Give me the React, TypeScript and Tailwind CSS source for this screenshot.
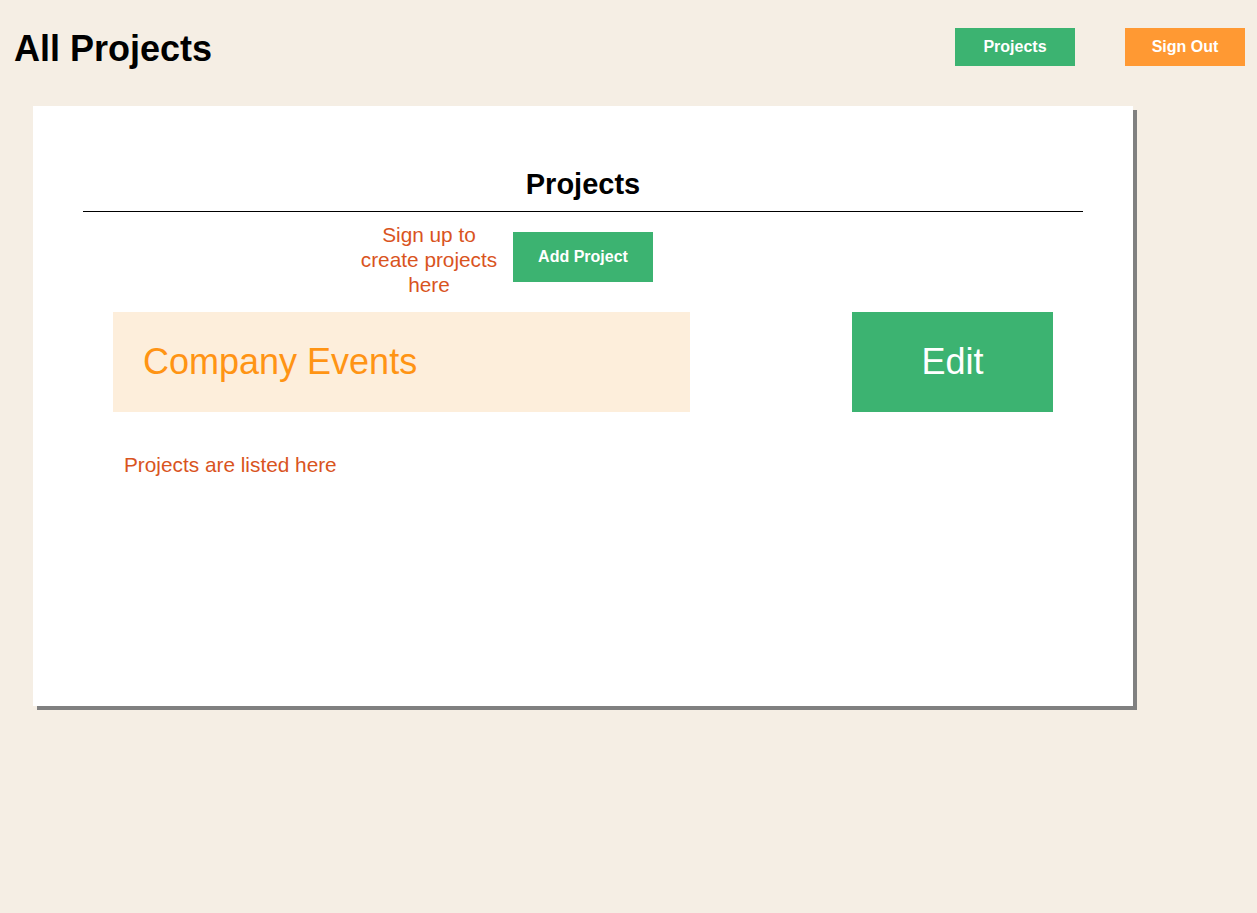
import React from "react";

export default function App() {
  return (
    <div className="min-h-[913px] w-full bg-[#f5eee4] font-['Liberation_Sans',Arial,sans-serif]">
      <header className="flex h-[66px] items-start justify-between pl-[14px] pr-[12px] pt-[28px]">
        <h1 className="mt-[1px] text-[36px] font-bold leading-[40px] text-black">All Projects</h1>
        <div className="flex gap-[50px]">
          <button className="h-[38px] w-[120px] bg-[#3cb371] text-[16px] font-bold text-white">Projects</button>
          <button className="h-[38px] w-[120px] bg-[#ff9933] text-[16px] font-bold text-white">Sign Out</button>
        </div>
      </header>
      <main className="ml-[33px] mt-[40px] h-[600px] w-[1100px] bg-white shadow-[4px_4px_0_#808080]">
        <div className="pt-[62px]">
          <h2 className="text-center text-[29px] font-bold leading-[32px] text-black">Projects</h2>
          <div className="mx-[50px] mt-[11px] h-px bg-black" />
          <div className="mt-[10px] flex items-start pl-[326px]">
            <p className="w-[140px] text-center text-[20.8px] leading-[25px] text-[#d9541e]">
              Sign up to create projects here
            </p>
            <button className="ml-[14px] mt-[10px] h-[50px] w-[140px] bg-[#3cb371] text-[16px] font-bold text-white">
              Add Project
            </button>
          </div>
          <div className="mx-[80px] mt-[15px] flex justify-between">
            <div className="flex h-[100px] w-[577px] items-center bg-[#fdeedb] pl-[30px]">
              <span className="text-[36px] leading-[40px] text-[#ff9414]">Company Events</span>
            </div>
            <button className="h-[100px] w-[201px] bg-[#3cb371] text-[36px] text-white">Edit</button>
          </div>
          <p className="ml-[91px] mt-[40px] text-[20.8px] leading-[25px] text-[#d9541e]">Projects are listed here</p>
        </div>
      </main>
    </div>
  );
}
